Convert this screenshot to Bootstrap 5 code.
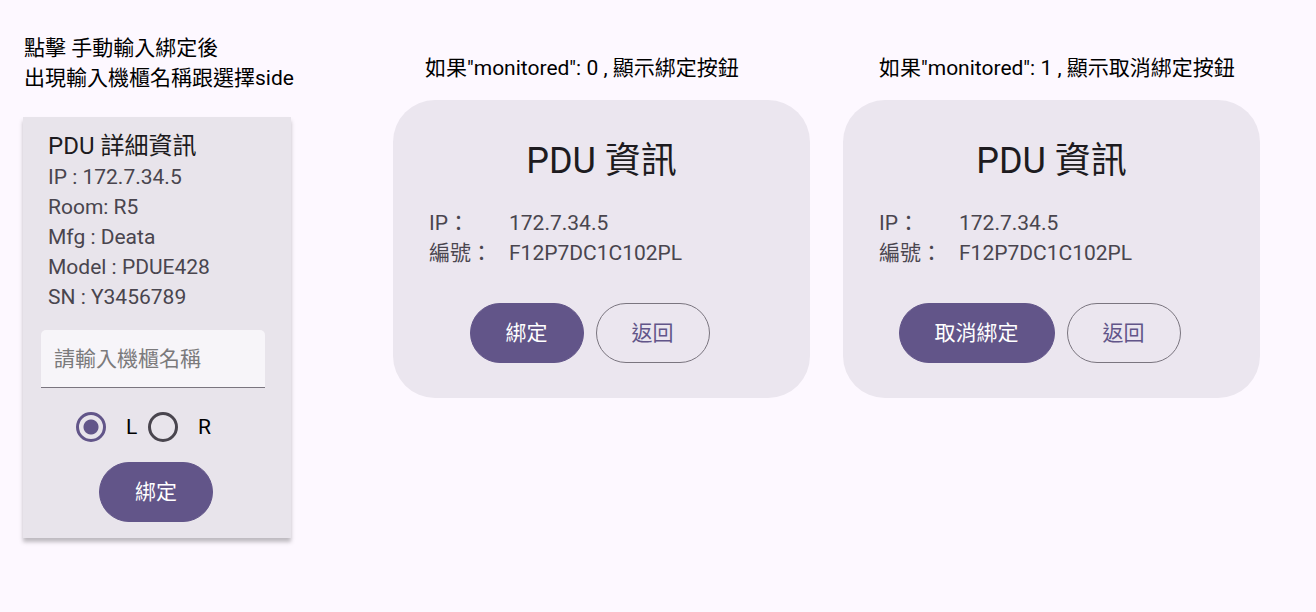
<!DOCTYPE html>
<html lang="zh-Hant">
<head>
<meta charset="utf-8">
<meta name="viewport" content="width=device-width, initial-scale=1">
<title>PDU 資訊</title>
<link rel="stylesheet" href="https://cdn.jsdelivr.net/npm/bootstrap@5.3.0/dist/css/bootstrap.min.css">
<style>
  :root { --primary: #625589; --text: #1d1b20; --text-soft: #49454e; --line: #7a757f; }
  body {
    font-family: Roboto, "Noto Sans CJK TC", sans-serif;
    font-size: 21px; line-height: 30px;
    background: #fdf8ff; color: #000;
  }
  .board {
    display: grid; grid-template-columns: 337fr 417fr 417fr; column-gap: 33px;
    align-items: start; padding: 33px 56px 33px 23px;
  }
  .note { margin: 0 0 24px; padding-left: 1px; white-space: nowrap; }
  .note-dialog { margin: 20px 0 17px; padding-left: 32px; }
  .detail-card {
    max-width: 268px; background: #e8e4eb; padding: 13px 20px 16px 18px;
    box-shadow: 0 4px 4px rgba(0, 0, 0, .25);
  }
  .detail-card h2 { font-size: 24px; line-height: 32px; font-weight: 400; color: var(--text); margin: 0; }
  .detail-text { padding-left: 7px; margin-bottom: 18px; }
  .soft { color: var(--text-soft); }
  .cabinet-field {
    height: 58px; max-width: 224px; font-size: 21px; padding: 0 13px;
    background: #f7f5f9; border: 0; border-bottom: 1px solid var(--line); border-radius: 5px 5px 0 0;
  }
  .cabinet-field::placeholder { color: #7b7a7c; }
  .side-choice { gap: 6px; margin: 24px 0 20px; padding-right: 22px; }
  .side-choice label { min-width: 16px; }
  .side-choice label { margin-left: 14px; }
  .side-radio {
    appearance: none; width: 30px; height: 30px; margin: 0; flex: none;
    border: 3px solid var(--text-soft); border-radius: 50%;
  }
  .side-radio:checked {
    border-color: var(--primary);
    background: radial-gradient(circle, var(--primary) 7px, transparent 8px);
  }
  .btn-pill {
    --bs-btn-font-size: 21px; --bs-btn-line-height: 30px; --bs-btn-border-radius: 30px;
    --bs-btn-padding-x: 35px; --bs-btn-padding-y: 14px;
    --bs-btn-color: #fff; --bs-btn-bg: var(--primary); --bs-btn-border-color: var(--primary);
    --bs-btn-hover-color: #fff; --bs-btn-hover-bg: #54487a; --bs-btn-hover-border-color: #54487a;
  }
  .btn-pill-outline { --bs-btn-color: var(--primary); --bs-btn-bg: transparent; --bs-btn-border-color: var(--line); }
  .dialog-card { background: #ebe6ef; border-radius: 42px; padding: 38px 36px 35px; }
  .dialog-card h2 { font-size: 36px; line-height: 46px; font-weight: 400; color: var(--text); text-align: center; margin: 0 0 24px; }
  .facts { display: grid; grid-template-columns: 80px 1fr; margin: 0 0 35px; color: var(--text-soft); }
  .facts dt { font-weight: 400; }
  .facts dd { margin: 0; }
  .actions { gap: 12px; padding-right: 24px; }
  @media (max-width: 1100px) { .board { grid-template-columns: 1fr; row-gap: 24px; padding-right: 23px; } }
</style>
</head>
<body>
<main class="board">
  <section>
    <p class="note">點擊 手動輸入綁定後<br>出現輸入機櫃名稱跟選擇side</p>
    <form class="detail-card">
      <div class="detail-text">
        <h2>PDU 詳細資訊</h2>
        <ul class="list-unstyled soft mb-0">
          <li>IP : 172.7.34.5</li>
          <li>Room: R5</li>
          <li>Mfg : Deata</li>
          <li>Model : PDUE428</li>
          <li>SN : Y3456789</li>
        </ul>
      </div>
      <input class="form-control cabinet-field" type="text" placeholder="請輸入機櫃名稱" aria-label="請輸入機櫃名稱">
      <div class="side-choice d-flex justify-content-center align-items-center">
        <input class="side-radio" type="radio" name="side" id="side-l" checked>
        <label for="side-l">L</label>
        <input class="side-radio" type="radio" name="side" id="side-r">
        <label for="side-r">R</label>
      </div>
      <div class="text-center"><button class="btn btn-pill" type="button">綁定</button></div>
    </form>
  </section>

  <section>
    <p class="note note-dialog">如果"monitored": 0 , 顯示綁定按鈕</p>
    <div class="dialog-card">
      <h2>PDU 資訊</h2>
      <dl class="facts">
        <dt>IP：</dt><dd>172.7.34.5</dd>
        <dt>編號：</dt><dd>F12P7DC1C102PL</dd>
      </dl>
      <div class="actions d-flex justify-content-center">
        <button class="btn btn-pill" type="button">綁定</button>
        <button class="btn btn-pill btn-pill-outline" type="button">返回</button>
      </div>
    </div>
  </section>

  <section>
    <p class="note note-dialog ms-1">如果"monitored": 1 , 顯示取消綁定按鈕</p>
    <div class="dialog-card">
      <h2>PDU 資訊</h2>
      <dl class="facts">
        <dt>IP：</dt><dd>172.7.34.5</dd>
        <dt>編號：</dt><dd>F12P7DC1C102PL</dd>
      </dl>
      <div class="actions d-flex justify-content-center">
        <button class="btn btn-pill" type="button">取消綁定</button>
        <button class="btn btn-pill btn-pill-outline" type="button">返回</button>
      </div>
    </div>
  </section>
</main>
<script src="https://cdn.jsdelivr.net/npm/bootstrap@5.3.0/dist/js/bootstrap.bundle.min.js"></script>
</body>
</html>
